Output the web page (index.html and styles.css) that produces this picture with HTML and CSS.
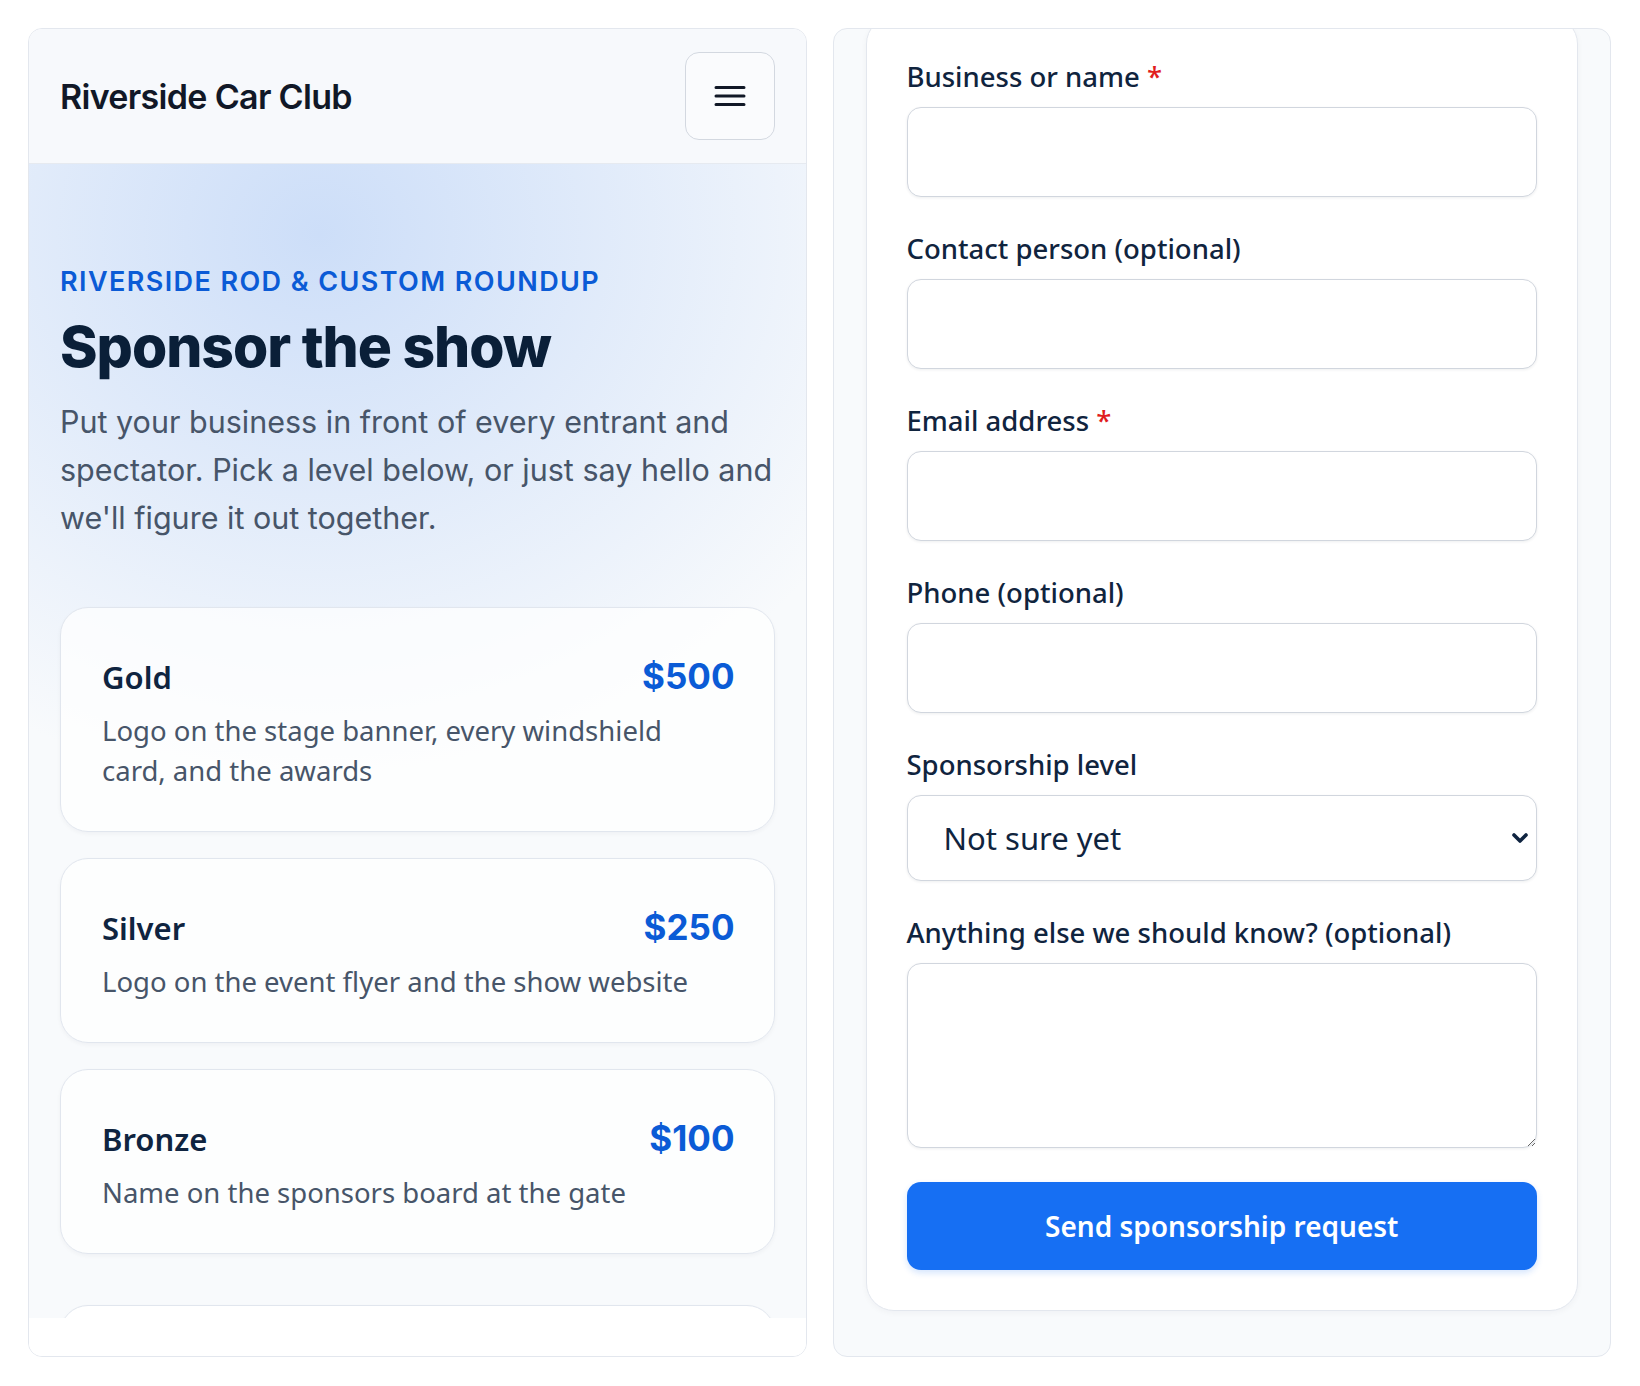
FILE: index.html
```html
<!DOCTYPE html>
<html lang="en">
<head>
<meta charset="utf-8">
<title>Sponsor the show – Riverside Car Club</title>
<link rel="stylesheet" href="styles.css">
</head>
<body>
<div class="page">
  <section class="panel panel-left">
    <header class="site-header">
      <div class="brand">Riverside Car Club</div>
      <button class="menu-btn" type="button" aria-label="Open menu">
        <svg width="32" height="24" viewBox="0 0 32 24" aria-hidden="true">
          <path d="M2 3.5h28M2 12h28M2 20.5h28" stroke="#111827" stroke-width="3" stroke-linecap="round" fill="none"/>
        </svg>
      </button>
    </header>
    <div class="scroll">
      <div class="hero">
        <p class="eyebrow">Riverside Rod &amp; Custom Roundup</p>
        <h1 class="title">Sponsor the show</h1>
        <p class="lead">Put your business in front of every entrant and spectator. Pick a level below, or just say hello and we'll figure it out together.</p>
      </div>
      <div class="tiers">
        <article class="tier">
          <div class="tier-head"><h3 class="tier-name">Gold</h3><span class="tier-price">$500</span></div>
          <p class="tier-desc">Logo on the stage banner, every windshield card, and the awards</p>
        </article>
        <article class="tier">
          <div class="tier-head"><h3 class="tier-name">Silver</h3><span class="tier-price">$250</span></div>
          <p class="tier-desc">Logo on the event flyer and the show website</p>
        </article>
        <article class="tier">
          <div class="tier-head"><h3 class="tier-name">Bronze</h3><span class="tier-price">$100</span></div>
          <p class="tier-desc">Name on the sponsors board at the gate</p>
        </article>
      </div>
      <div class="tier tier-more"></div>
    </div>
    <div class="panel-foot"></div>
  </section>

  <section class="panel panel-right">
    <div class="form-scroll">
      <form class="form-card" onsubmit="return false">
        <div class="field">
          <label class="label" for="biz">Business or name <span class="req">*</span></label>
          <input class="control" id="biz" type="text">
        </div>
        <div class="field">
          <label class="label" for="contact">Contact person (optional)</label>
          <input class="control" id="contact" type="text">
        </div>
        <div class="field">
          <label class="label" for="email">Email address <span class="req">*</span></label>
          <input class="control" id="email" type="email">
        </div>
        <div class="field">
          <label class="label" for="phone">Phone (optional)</label>
          <input class="control" id="phone" type="tel">
        </div>
        <div class="field">
          <label class="label" for="level">Sponsorship level</label>
          <div class="select-wrap">
            <select class="control select" id="level">
              <option>Not sure yet</option>
              <option>Gold – $500</option>
              <option>Silver – $250</option>
              <option>Bronze – $100</option>
            </select>
            <svg class="chev" width="20" height="14" viewBox="0 0 20 14" aria-hidden="true">
              <path d="M4 4l6 6 6-6" stroke="#0f2440" stroke-width="3.6" fill="none" stroke-linecap="round" stroke-linejoin="round"/>
            </svg>
          </div>
        </div>
        <div class="field field-notes">
          <label class="label" for="notes">Anything else we should know? (optional)</label>
          <textarea class="control textarea" id="notes"></textarea>
        </div>
        <button class="submit" type="submit">Send sponsorship request</button>
      </form>
    </div>
  </section>
</div>
<script src="script.js"></script>
</body>
</html>
```

FILE: styles.css
```css
* { box-sizing: border-box; }

html, body {
  margin: 0;
  padding: 0;
  background: #ffffff;
}

body {
  font-family: "Noto Sans", "Open Sans", sans-serif;
  color: #10243e;
}

.page {
  height: 1386px;
  padding: 28px 29px 29px 28px;
  display: grid;
  grid-template-columns: 1fr 1fr;
  gap: 26px;
}

.panel {
  border: 1px solid #e3e7ee;
  border-radius: 14px;
  overflow: hidden;
  min-height: 0;
}

/* ---------- Left panel ---------- */
.panel-left {
  display: flex;
  flex-direction: column;
  background: #ffffff;
}

.site-header {
  flex: 0 0 135px;
  display: flex;
  align-items: center;
  justify-content: space-between;
  padding: 0 31px;
  background: #f7f9fc;
  border-bottom: 1px solid #e6eaf0;
}

.brand {
  font-family: "Inter", sans-serif;
  font-weight: 600;
  font-size: 34px;
  letter-spacing: -0.02em;
  color: #111827;
}

.menu-btn {
  width: 90px;
  height: 88px;
  border: 1.5px solid #d3d8e0;
  border-radius: 14px;
  background: #fafbfd;
  display: flex;
  align-items: center;
  justify-content: center;
  padding: 0;
}

.scroll {
  flex: 1 1 auto;
  min-height: 0;
  overflow: hidden;
  padding: 0 31px;
  background:
    radial-gradient(ellipse 620px 560px at 290px 70px, rgba(200, 219, 248, 0.9), rgba(200, 219, 248, 0) 100%),
    #f8fafc;
}

.hero {
  padding-top: 101px;
}

.eyebrow {
  margin: 0;
  font-family: "Inter", sans-serif;
  font-weight: 600;
  font-size: 27px;
  line-height: 34px;
  letter-spacing: 0.052em;
  text-transform: uppercase;
  color: #0b5bd6;
}

.title {
  margin: 17px 0 0;
  font-family: "Inter", sans-serif;
  font-weight: 800;
  font-size: 57px;
  line-height: 62px;
  letter-spacing: -0.018em;
  color: #0a1f38;
}

.lead {
  margin: 20px 0 0;
  font-family: "Inter", sans-serif;
  font-size: 30.5px;
  line-height: 48px;
  color: #475569;
}

.tiers {
  margin-top: 65px;
  display: flex;
  flex-direction: column;
  gap: 26px;
}

.tier {
  background: rgba(255, 255, 255, 0.72);
  border: 1px solid #e1e6ee;
  border-radius: 28px;
  padding: 46px 39px 40px 41px;
  box-shadow: 0 2px 4px rgba(15, 23, 42, 0.04);
}

.tier-head {
  display: flex;
  justify-content: space-between;
  align-items: baseline;
}

.tier-name {
  margin: 0;
  font-size: 31px;
  line-height: 39px;
  font-weight: 600;
  color: #0f2440;
}

.tier-price {
  font-family: "Inter", sans-serif;
  font-weight: 700;
  font-size: 35px;
  line-height: 44px;
  color: #0b5bd6;
}

.tier-desc {
  margin: 13px 0 0;
  max-width: 600px;
  font-size: 27.5px;
  line-height: 40px;
  color: #475569;
}

.tier-more {
  margin-top: 51px;
  height: 300px;
  background: #ffffff;
}

.panel-foot {
  flex: 0 0 38px;
  background: #ffffff;
}

/* ---------- Right panel ---------- */
.panel-right {
  background: #f8fafc;
  display: flex;
  flex-direction: column;
}

.form-scroll {
  flex: 1 1 auto;
  min-height: 0;
  overflow: auto;
  scrollbar-width: none;
  padding: 32px 32px 45px;
}

.form-scroll::-webkit-scrollbar { display: none; }

.form-card {
  background: #ffffff;
  border: 1px solid #e3e7ee;
  border-radius: 28px;
  padding: 40px;
  box-shadow: 0 2px 6px rgba(15, 23, 42, 0.04);
}

.field {
  margin-bottom: 32px;
}

.field-notes {
  margin-bottom: 34px;
}

.label {
  display: block;
  margin-bottom: 10px;
  font-size: 27.5px;
  line-height: 40px;
  font-weight: 500;
  color: #10243e;
}

.req {
  color: #e11d1d;
}

.control {
  display: block;
  width: 100%;
  height: 90px;
  margin: 0;
  border: 1.5px solid #d1d6de;
  border-radius: 14px;
  background: #ffffff;
  box-shadow: 0 1px 3px rgba(15, 23, 42, 0.07);
  font-family: "Noto Sans", sans-serif;
  font-size: 30px;
  color: #10243e;
  padding: 0 36px;
  outline: none;
}

.select-wrap {
  position: relative;
}

.select {
  height: 86px;
  appearance: none;
  -webkit-appearance: none;
  font-size: 31px;
  padding-right: 70px;
}

.chev {
  position: absolute;
  right: 7px;
  top: 36px;
  pointer-events: none;
}

.textarea {
  height: 185px;
  padding: 20px 24px;
  resize: vertical;
}

.submit {
  display: block;
  width: 100%;
  height: 88px;
  border: 0;
  border-radius: 14px;
  background: #166ff3;
  color: #ffffff;
  font-family: "Noto Sans", sans-serif;
  font-size: 28px;
  font-weight: 600;
  box-shadow: 0 3px 6px rgba(22, 111, 243, 0.18);
  cursor: pointer;
}
```

FILE: script.js
```js
document.querySelectorAll('.form-scroll').forEach(function (el) {
  el.scrollTop = el.scrollHeight;
});
```
